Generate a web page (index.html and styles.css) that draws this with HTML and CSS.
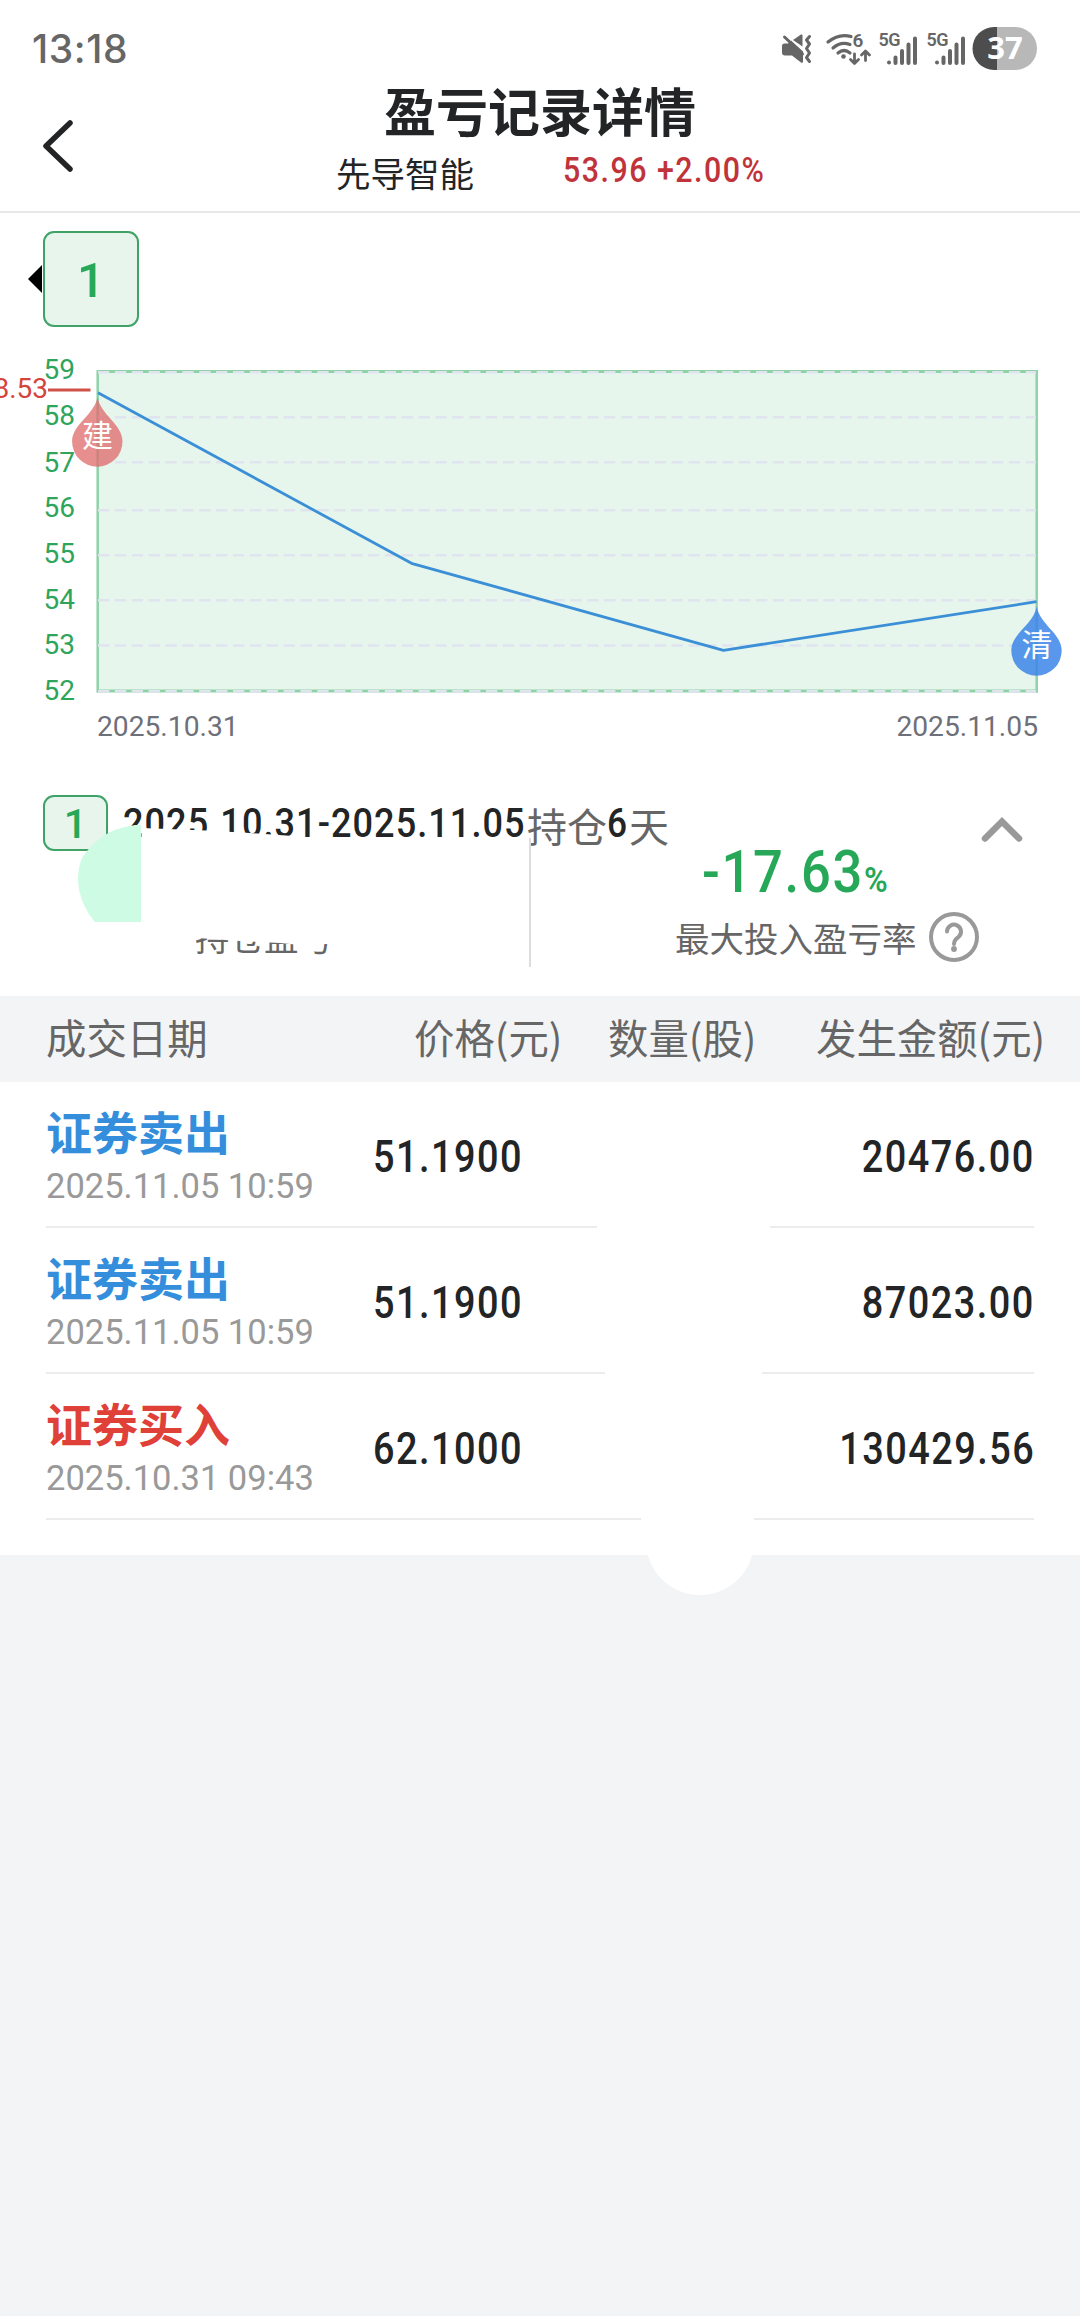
FILE: index.html
```html
<!DOCTYPE html>
<html lang="zh-CN">
<head>
    <meta charset="UTF-8">
    <title>盈亏记录详情</title>
    <link rel="stylesheet" href="styles.css">
</head>
<body>
    <div class="status-bar">
        <span class="clock">13:18</span>
        <svg class="status-icons" width="262" height="48" viewBox="778 24 262 48">
            <!-- muted -->
            <g fill="#666">
                <path d="M782 46q0-2.500 2.500-2.500h3.500l3-3 12 11v10q0 2-2 1l-9-7h-7q-3 0-3-3z"/>
                <path d="M793 40l8-5.500q1.500-.5 1.500 1v11z"/>
            </g>
            <g fill="none" stroke="#666" stroke-width="3" stroke-linecap="round" stroke-linejoin="round">
                <path d="M784.500 37l18 17"/>
                <path d="M809.500 36.500l-3 3.500 3 4-3 4.500 3 4.500-3 4.500 3 4"/>
            </g>
            <!-- wifi 6 -->
            <g fill="none" stroke="#666" stroke-width="3.200" stroke-linecap="round" stroke-linejoin="round">
                <path d="M828 42q11-9 23-5.500"/>
                <path d="M833 48q8-7 17-3.500"/>
                <path d="M838 53q6-5 12 0"/>
                <path d="M854.500 54v9m-4-3.500l4 4 4-4" stroke-width="2.800"/>
                <path d="M865.500 60.500v-9m-4 3.500l4-4 4 4" stroke-width="2.800"/>
            </g>
            <circle cx="843.500" cy="56.500" r="2.300" fill="#666"/>
            <text class="tiny" x="852.500" y="47" font-size="19">6</text>
            <!-- signals -->
            <g id="signal">
                <text class="tiny five-g" x="878.500" y="46" font-size="18">5G</text>
                <g stroke="#666" stroke-width="4" stroke-linecap="round">
                    <path d="M889 62.500v.1M895.500 57.500v5.500M902 51v12M908.500 44.500v18.500M915 38.500v24.500"/>
                </g>
            </g>
            <use href="#signal" x="48"/>
            <!-- battery -->
            <path d="M997 27h-3a21 21 0 0 0 0 43h3z" fill="#4d4d4d"/>
            <path d="M997 27h18.500a21 21 0 0 1 0 43h-18.500z" fill="#b8b8b8"/>
            <text class="battery-text" x="1005" y="59">37</text>
        </svg>
    </div>

    <header class="navbar">
        <svg class="back" width="36" height="56" viewBox="0 0 36 56">
            <path d="M29 5L5 28l24 23" fill="none" stroke="#222425" stroke-width="5.500" stroke-linecap="round" stroke-linejoin="round"/>
        </svg>
        <div class="heading">
            <h1>盈亏记录详情</h1>
            <div class="stock">
                <span class="stock-name">先导智能</span>
                <span class="num stock-price">53.96 +2.00%</span>
            </div>
        </div>
    </header>

    <main class="panel">
        <div class="tabs">
            <span class="tab-arrow"></span>
            <div class="tab"><span class="num">1</span></div>
        </div>

        <svg class="chart" width="1080" height="420" viewBox="0 340 1080 420">
            <rect x="97.500" y="371" width="939.500" height="321" fill="#e6f6ec"/>
            <path d="M97 371.500H1038M97 691H1038" stroke="#8fd2a8" stroke-width="3"/>
            <path d="M97.700 370V692.500M1036.700 370V692.500" stroke="#8fd2a8" stroke-width="2.500"/>
            <g class="grid">
                <path d="M98 372.200H1036M98 417.300H1036M98 462.300H1036M98 510.300H1036M98 555.300H1036M98 600.300H1036M98 645.500H1036M98 691.200H1036"/>
            </g>
            <polyline points="98,392.700 411.500,563.300 723.500,650.300 1036.500,601.700" fill="none" stroke="#3b8fd6" stroke-width="2.800" stroke-linejoin="round"/>
            <g class="y-label">
                <text x="75" y="379">59</text>
                <text x="75" y="425">58</text>
                <text x="75" y="471.500">57</text>
                <text x="75" y="516.700">56</text>
                <text x="75" y="562.700">55</text>
                <text x="75" y="608.700">54</text>
                <text x="75" y="654">53</text>
                <text x="75" y="700">52</text>
                <text class="cost" x="48" y="398.300">58.53</text>
            </g>
            <path d="M48 390H90.500" stroke="#cf5148" stroke-width="3"/>
            <path d="M97.500 397c3 18 25 27 25 44.500a25.200 25.200 0 0 1-50.400 0c0-17.500 22.400-26.500 25.400-44.500z" fill="#df6a6c" fill-opacity=".76"/>
            <text class="pin" x="97.500" y="446.500">建</text>
            <path d="M1036.700 606.500c3 18 25 27 25 44a25.200 25.200 0 0 1-50.400 0c0-17 22.400-26 25.400-44z" fill="#3c86e8" fill-opacity=".86"/>
            <text class="pin" x="1037" y="656">清</text>
            <text class="x-label" x="97" y="736">2025.10.31</text>
            <text class="x-label x-end" x="1038" y="736">2025.11.05</text>
        </svg>

        <section class="summary">
            <div class="period">
                <div class="badge"><span class="num">1</span></div>
                <span class="num range">2025.10.31-2025.11.05</span>
                <span class="hold">持仓</span>
                <span class="num days">6</span>
                <span class="hold">天</span>
                <svg class="fold" width="44" height="28" viewBox="0 0 44 28">
                    <path d="M5 22.500L22 5.500l17 17" fill="none" stroke="#999" stroke-width="6.500" stroke-linecap="round"/>
                </svg>
            </div>
            <div class="stats">
                <div class="stat stat-left">
                    <span class="stat-label">持仓盈亏</span>
                </div>
                <div class="stat stat-right">
                    <div class="rate"><span class="num rate-value">-17.63</span><span class="num rate-unit">%</span></div>
                    <div class="stat-label">
                        最大投入盈亏率
                        <svg width="50" height="50" viewBox="0 0 50 50">
                            <circle cx="25" cy="25" r="23" fill="none" stroke="#999" stroke-width="4"/>
                            <path d="M18 19.500a7 7 0 1 1 11.500 5.500q-4.500 3-4.500 7" fill="none" stroke="#999" stroke-width="4" stroke-linecap="round"/>
                            <circle cx="25" cy="37" r="2.900" fill="#999"/>
                        </svg>
                    </div>
                </div>
            </div>
            <!-- smear over the hidden profit -->
            <svg class="smear" width="270" height="125" viewBox="75 820 270 125">
                <path d="M141.500 828L206 830.500 250 833 300 836.500 312 841H340V943.500L300 945 280 943 240 941 190 937.500V922H141z" fill="#fff"/>
                <path d="M141 825H135Q114 828 102 837T82.500 857Q78 867 78 879T84 905Q88 914 95 922H141z" fill="#cdfbe3"/>
            </svg>
        </section>

        <div class="table-head">
            <span class="col-date">成交日期</span>
            <span class="col-price">价格(元)</span>
            <span class="col-qty">数量(股)</span>
            <span>发生金额(元)</span>
        </div>

        <div class="rows">
            <div class="row">
                <div class="trade">
                    <div class="side sell">证券卖出</div>
                    <div class="time">2025.11.05 10:59</div>
                </div>
                <span class="num price">51.1900</span>
                <span class="num amount">20476.00</span>
                <i class="hidden-qty gap-1"></i>
            </div>
            <div class="row">
                <div class="trade">
                    <div class="side sell">证券卖出</div>
                    <div class="time">2025.11.05 10:59</div>
                </div>
                <span class="num price">51.1900</span>
                <span class="num amount">87023.00</span>
                <i class="hidden-qty gap-2"></i>
            </div>
            <div class="row">
                <div class="trade">
                    <div class="side buy">证券买入</div>
                    <div class="time">2025.10.31 09:43</div>
                </div>
                <span class="num price">62.1000</span>
                <span class="num amount">130429.56</span>
                <i class="hidden-qty gap-3"></i>
            </div>
        </div>
        <i class="blob"></i>
    </main>
</body>
</html>
```

FILE: styles.css
```css
* {
    box-sizing: border-box;
}
body {
    margin: 0;
    width: 1080px;
    min-height: 2316px;
    background: #f3f4f6;
    font-family: "Noto Sans CJK SC", sans-serif;
    color: #222425;
    overflow-x: hidden;
}
.num {
    display: inline-block;
    font-family: Roboto, sans-serif;
    font-weight: 500;
    white-space: nowrap;
    transform-origin: left center;
}

/* status bar */
.status-bar {
    display: flex;
    justify-content: space-between;
    height: 76px;
    padding: 24px 40px 0 32px;
    background: #fff;
}
.clock {
    font: 500 39px/49px Inter, sans-serif;
    letter-spacing: 0.6px;
    color: #666;
}
.tiny {
    font-family: Roboto, sans-serif;
    font-weight: 600;
    fill: #666;
}
.five-g {
    letter-spacing: -0.6px;
}
.battery-text {
    font: 700 31px "Open Sans", sans-serif;
    fill: #fff;
    text-anchor: middle;
}

/* title */
.navbar {
    display: flex;
    height: 137px;
    border-bottom: 2px solid #e8e8e8;
    background: #fff;
}
.back {
    margin: 42px 0 0 41px;
}
.heading {
    width: 926px;
    padding: 2px 0 0;
}
h1 {
    margin: 0 0 0 307px;
    font-size: 52px;
    line-height: 64px;
    font-weight: 700;
}
.stock {
    display: flex;
    margin: 5px 0 0 259px;
    line-height: 46px;
}
.stock-name {
    width: 227px;
    font-size: 34.5px;
    line-height: 50px;
}
.stock-price {
    font-size: 34.5px;
    letter-spacing: 1.7px;
    color: #c1333a;
    transform: scaleX(0.88);
}

.panel {
    position: relative;
    height: 1342px;
    background: #fff;
}

.tabs {
    display: flex;
    align-items: center;
    height: 127px;
    padding: 5px 0 0 28px;
}
.tab-arrow {
    border: 14px solid transparent;
    border-left: 0;
    border-right-color: #000;
}
.tab {
    display: flex;
    justify-content: center;
    align-items: center;
    width: 96px;
    height: 96px;
    margin-left: 1px;
    padding-top: 2px;
    border: 2px solid #3fa267;
    border-radius: 11px;
    background: #e8f5ec;
    color: #27a858;
    font-size: 49px;
}

/* chart */
.chart {
    display: block;
}
.grid {
    fill: none;
    stroke: #dfe4ef;
    stroke-width: 2.6;
    stroke-dasharray: 11.3 5.57;
}
.y-label {
    font: 28px Roboto, sans-serif;
    fill: #2fa55c;
    text-anchor: end;
}
.cost {
    fill: #d5443c;
}
.pin {
    font-size: 31px;
    fill: #fff;
    text-anchor: middle;
}
.x-label {
    font: 28.2px Roboto, sans-serif;
    fill: #6e7079;
}
.x-end {
    text-anchor: end;
}

/* summary */
.summary {
    position: relative;
    height: 236px;
    padding: 35px 0 0 43px;
}
.period {
    display: flex;
    height: 56px;
    font-size: 40px;
}
.badge {
    display: flex;
    justify-content: center;
    align-items: center;
    width: 65px;
    height: 56px;
    margin-right: 15px;
    padding-top: 2px;
    border: 2px solid #3fa267;
    border-radius: 11px;
    background: #e8f5ec;
    color: #27a858;
    font-size: 41px;
}
.range {
    width: 404px;
    font-size: 41px;
    line-height: 56px;
    letter-spacing: 1.2px;
    transform: scaleX(0.88);
}
.hold {
    color: #666;
    line-height: 60px;
}
.days {
    width: 22px;
    font-size: 41px;
    line-height: 56px;
    transform: scaleX(0.86);
}
.fold {
    margin: 21px 0 0 311px;
}
.stats {
    display: flex;
    height: 129px;
    margin: -13px 0 0 -43px;
}
.stat-left {
    width: 531px;
    border-right: 2px solid #ddd;
    padding: 73px 0 0 195px;
}
.stat-right {
    padding-left: 144px;
}
.stat-label {
    display: flex;
    align-items: center;
    gap: 12px;
    font-size: 34.5px;
    line-height: 50px;
    color: #666;
}
.rate {
    display: flex;
    align-items: baseline;
    height: 64px;
    padding: 2px 0 0 27px;
    margin-bottom: 10px;
    color: #27a858;
}
.rate-value {
    width: 162px;
    font-size: 59px;
    line-height: 64px;
    letter-spacing: 1.9px;
    transform: scaleX(0.89);
}
.rate-unit {
    font-size: 35px;
    font-weight: 600;
    transform: scaleX(0.92);
}
.smear {
    position: absolute;
    left: 75px;
    top: 60px;
}

/* trades */
.table-head {
    display: flex;
    height: 86px;
    padding-left: 46px;
    background: #f3f4f6;
    font-size: 40.4px;
    line-height: 82px;
    color: #666;
    white-space: nowrap;
}
.col-date {
    width: 368px;
}
.col-price {
    width: 194px;
}
.col-qty {
    width: 208px;
}
.rows {
    padding: 0 46px;
}
.row {
    position: relative;
    display: flex;
    height: 146px;
    border-bottom: 2px solid #ececec;
}
.trade {
    width: 327px;
    padding-top: 21px;
}
.side {
    font-size: 46px;
    font-weight: 700;
    line-height: 54px;
}
.sell {
    color: #348edb;
}
.buy {
    color: #df4038;
}
.time {
    font: 34.5px/44px Roboto, sans-serif;
    margin-top: 7px;
    color: #999;
}
.price,
.amount {
    font-size: 43.5px;
    line-height: 151px;
    letter-spacing: 1.7px;
    transform: scaleX(0.87);
}
.amount {
    margin-left: auto;
    margin-right: -1px;
    transform-origin: right center;
}
.hidden-qty {
    position: absolute;
    bottom: -2px;
    height: 2px;
    background: #fff;
}
.gap-1 {
    left: 551px;
    width: 173px;
}
.gap-2 {
    left: 559px;
    width: 157px;
}
.gap-3 {
    left: 595px;
    width: 113px;
}
.blob {
    position: absolute;
    left: 646px;
    bottom: -40px;
    width: 108px;
    height: 74px;
    border-radius: 0 0 54px 54px;
    background: #fff;
}
```
